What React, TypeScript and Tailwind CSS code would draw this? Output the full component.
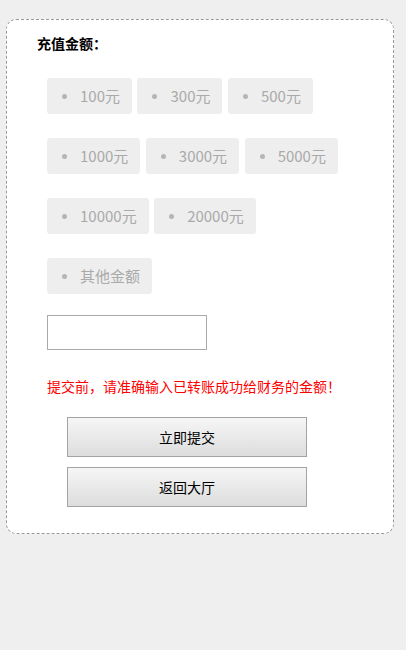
const rows = [
  ["100元", "300元", "500元"],
  ["1000元", "3000元", "5000元"],
  ["10000元", "20000元"],
  ["其他金额"],
];

function Chip({ label }: { label: string }) {
  return (
    <div className="flex items-center h-[36px] pl-[15px] pr-[12px] rounded-[3px] bg-[#eeeeee] text-[15px] text-[#aaaaaa] leading-[36px]">
      <span className="w-[5px] h-[5px] rounded-full bg-[#b5b5b5] shrink-0" />
      <span className="ml-[13px]">{label}</span>
    </div>
  );
}

export default function App() {
  return (
    <div
      className="min-h-screen bg-[#efefef] pt-[19px] pb-[40px]"
      style={{ fontFamily: '"Noto Sans CJK SC", "Liberation Sans", sans-serif' }}
    >
      {/* Card */}
      <div className="ml-[6px] w-[388px] bg-white border border-dashed border-[#999999] rounded-[10px] pl-[30px] pt-[13px] pb-[26px]">
        <div className="text-[14px] font-bold text-black leading-[20px]">充值金额：</div>

        {/* Options */}
        <div className="ml-[10px] mt-[25px] flex flex-col gap-[24px]">
          {rows.map((row, i) => (
            <div key={i} className="flex gap-[5.5px]">
              {row.map((label) => (
                <Chip key={label} label={label} />
              ))}
            </div>
          ))}
        </div>

        <input
          type="text"
          className="ml-[10px] mt-[21px] block w-[160px] h-[35px] border border-[#aaaaaa] bg-white outline-none px-2 text-[14px]"
        />

        <div className="ml-[10px] mt-[26px] text-[14px] leading-[20px] text-[#ff0000]">
          提交前，请准确输入已转账成功给财务的金额！
        </div>

        {/* Buttons */}
        <div className="ml-[30px] mt-[21px] flex flex-col gap-[10px]">
          {["立即提交", "返回大厅"].map((t) => (
            <button
              key={t}
              className="w-[240px] h-[40px] border border-[#a3a3a3] bg-gradient-to-b from-[#f6f6f6] to-[#dddddd] text-[14px] text-black"
            >
              {t}
            </button>
          ))}
        </div>
      </div>
    </div>
  );
}
